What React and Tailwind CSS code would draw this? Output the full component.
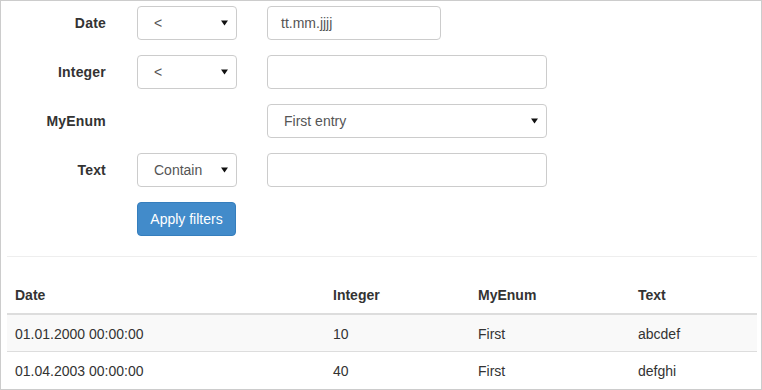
import React from 'react'

const font = { fontFamily: '"Liberation Sans", Arial, sans-serif' }

function Caret() {
  return (
    <svg width="7" height="6" viewBox="0 0 7 6" className="shrink-0">
      <path d="M0 0.5 H7 L3.5 5.5 Z" fill="#111" />
    </svg>
  )
}

// fake select box (native arrow look)
function SelectBox({ value, className = '' }) {
  return (
    <div className={`h-[34px] flex items-center justify-between border border-[#ccc] rounded-[4px] bg-white pr-[8px] ${className}`}>
      <span className="text-[14px] text-[#555]">{value}</span>
      <Caret />
    </div>
  )
}

function TextBox({ placeholder, className = '' }) {
  return (
    <div className={`h-[34px] flex items-center border border-[#ccc] rounded-[4px] bg-white pl-[13px] text-[14px] text-[#555] ${className}`}>
      {placeholder}
    </div>
  )
}

function FilterRow({ label, children }) {
  return (
    <div className="flex items-center h-[34px] mb-[15px]">
      <label className="w-[105px] text-right font-bold text-[14px] text-[#333] tracking-[0.2px]">{label}</label>
      {children}
    </div>
  )
}

const rows = [
  { date: '01.01.2000 00:00:00', integer: '10', myEnum: 'First', text: 'abcdef' },
  { date: '01.04.2003 00:00:00', integer: '40', myEnum: 'First', text: 'defghi' },
]

export default function App() {
  return (
    <div className="w-[762px] h-[390px] border border-[#ccc] bg-white overflow-hidden text-[#333]" style={font}>
      {/* Filters */}
      <div className="pt-[5px]">
        <FilterRow label="Date">
          <SelectBox value="<" className="ml-[31px] w-[100px] pl-[16px]" />
          <TextBox placeholder="tt.mm.jjjj" className="ml-[30px] w-[174px]" />
        </FilterRow>
        <FilterRow label="Integer">
          <SelectBox value="<" className="ml-[31px] w-[100px] pl-[16px]" />
          <TextBox className="ml-[30px] w-[280px]" />
        </FilterRow>
        <FilterRow label="MyEnum">
          <SelectBox value="First entry" className="ml-[161px] w-[280px] pl-[16px]" />
        </FilterRow>
        <FilterRow label="Text">
          <SelectBox value="Contain" className="ml-[31px] w-[100px] pl-[16px]" />
          <TextBox className="ml-[30px] w-[280px]" />
        </FilterRow>
        <div className="pl-[136px]">
          <button className="w-[99px] h-[34px] bg-[#428bca] border border-[#357ebd] rounded-[4px] text-white text-[14px]">
            Apply filters
          </button>
        </div>
      </div>

      <div className="ml-[6px] w-[750px] mt-[20px] border-t border-[#eee]" />

      {/* Results */}
      <table className="ml-[6px] w-[750px] mt-[20px] border-collapse text-[14px] leading-[20px]">
        <thead>
          <tr>
            <th className="w-[318px] text-left font-bold p-[8px] border-b-2 border-[#ddd]">Date</th>
            <th className="w-[145px] text-left font-bold p-[8px] border-b-2 border-[#ddd]">Integer</th>
            <th className="w-[160px] text-left font-bold p-[8px] border-b-2 border-[#ddd]">MyEnum</th>
            <th className="text-left font-bold p-[8px] border-b-2 border-[#ddd]">Text</th>
          </tr>
        </thead>
        <tbody>
          {rows.map((r, i) => (
            <tr key={i} className={i % 2 === 0 ? 'bg-[#f9f9f9]' : ''}>
              <td className="p-[8px] pt-[9px] pb-[7px] border-t border-[#ddd]">{r.date}</td>
              <td className="p-[8px] pt-[9px] pb-[7px] border-t border-[#ddd]">{r.integer}</td>
              <td className="p-[8px] pt-[9px] pb-[7px] border-t border-[#ddd]">{r.myEnum}</td>
              <td className="p-[8px] pt-[9px] pb-[7px] border-t border-[#ddd]">{r.text}</td>
            </tr>
          ))}
        </tbody>
      </table>
    </div>
  )
}
